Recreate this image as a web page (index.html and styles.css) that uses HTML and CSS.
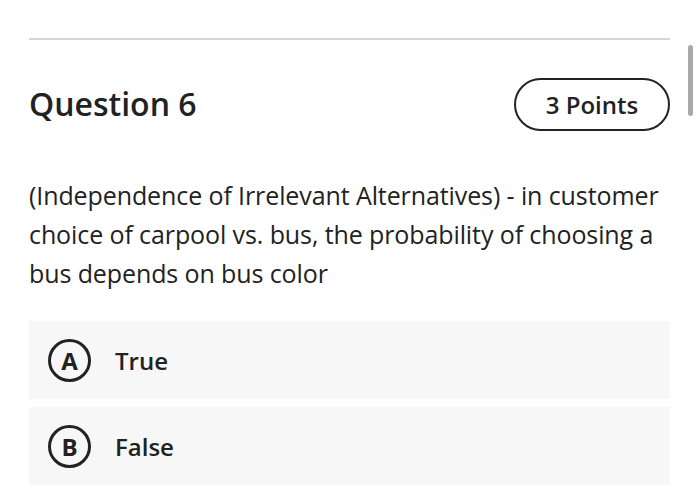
FILE: index.html
```html
<!DOCTYPE html>
<html>
<head>
<meta charset="utf-8">
<link rel="stylesheet" href="styles.css">
</head>
<body>
<div class="page">
  <hr class="rule">
  <div class="header">
    <h2 class="title">Question 6</h2>
    <span class="points">3 Points</span>
  </div>
  <p class="question">(Independence of Irrelevant Alternatives) - in customer choice of carpool vs. bus, the probability of choosing a bus depends on bus color</p>
  <div class="options">
    <div class="option"><span class="letter">A</span><span class="label">True</span></div>
    <div class="option"><span class="letter">B</span><span class="label">False</span></div>
  </div>
</div>
<div class="scrollbar"></div>
</body>
</html>
```
FILE: styles.css
```css
html, body {
  margin: 0;
  padding: 0;
  background: #ffffff;
  font-family: "Open Sans", "Noto Sans", sans-serif;
  color: #222222;
}
.page {
  width: 641px;
  margin-left: 29px;
  padding-top: 38px;
}
.rule {
  margin: 0;
  border: 0;
  height: 2px;
  background: #d6d6d6;
}
.header {
  display: flex;
  justify-content: space-between;
  align-items: center;
  margin-top: 38px;
  height: 54px;
}
.title {
  margin: 0 0 3px 0;
  font-size: 32px;
  font-weight: 600;
  letter-spacing: 0px;
}
.points {
  box-sizing: border-box;
  width: 156px;
  height: 53px;
  border: 2px solid #222;
  border-radius: 27px;
  display: flex;
  align-items: center;
  justify-content: center;
  font-size: 24px;
  font-weight: 600;
  margin-top: -1px;
}
.question {
  margin: 44px 0 0 0;
  font-size: 25px;
  line-height: 39px;
  letter-spacing: -0.1px;
  color: #222;
}
.options {
  display: flex;
  flex-direction: column;
  gap: 8px;
  margin-top: 28px;
}
.option {
  height: 78px;
  background: #f7f7f7;
  display: flex;
  align-items: center;
  padding-left: 19px;
}
.letter {
  box-sizing: border-box;
  width: 43px;
  height: 43px;
  border: 3px solid #222;
  border-radius: 50%;
  display: flex;
  align-items: center;
  justify-content: center;
  font-size: 24px;
  font-weight: 700;
}
.label {
  margin-left: 24px;
  font-size: 24px;
  font-weight: 600;
}
.scrollbar {
  position: absolute;
  left: 688px;
  top: 45px;
  width: 5px;
  height: 71px;
  border-radius: 3px;
  background: #a9a9a9;
}
```
